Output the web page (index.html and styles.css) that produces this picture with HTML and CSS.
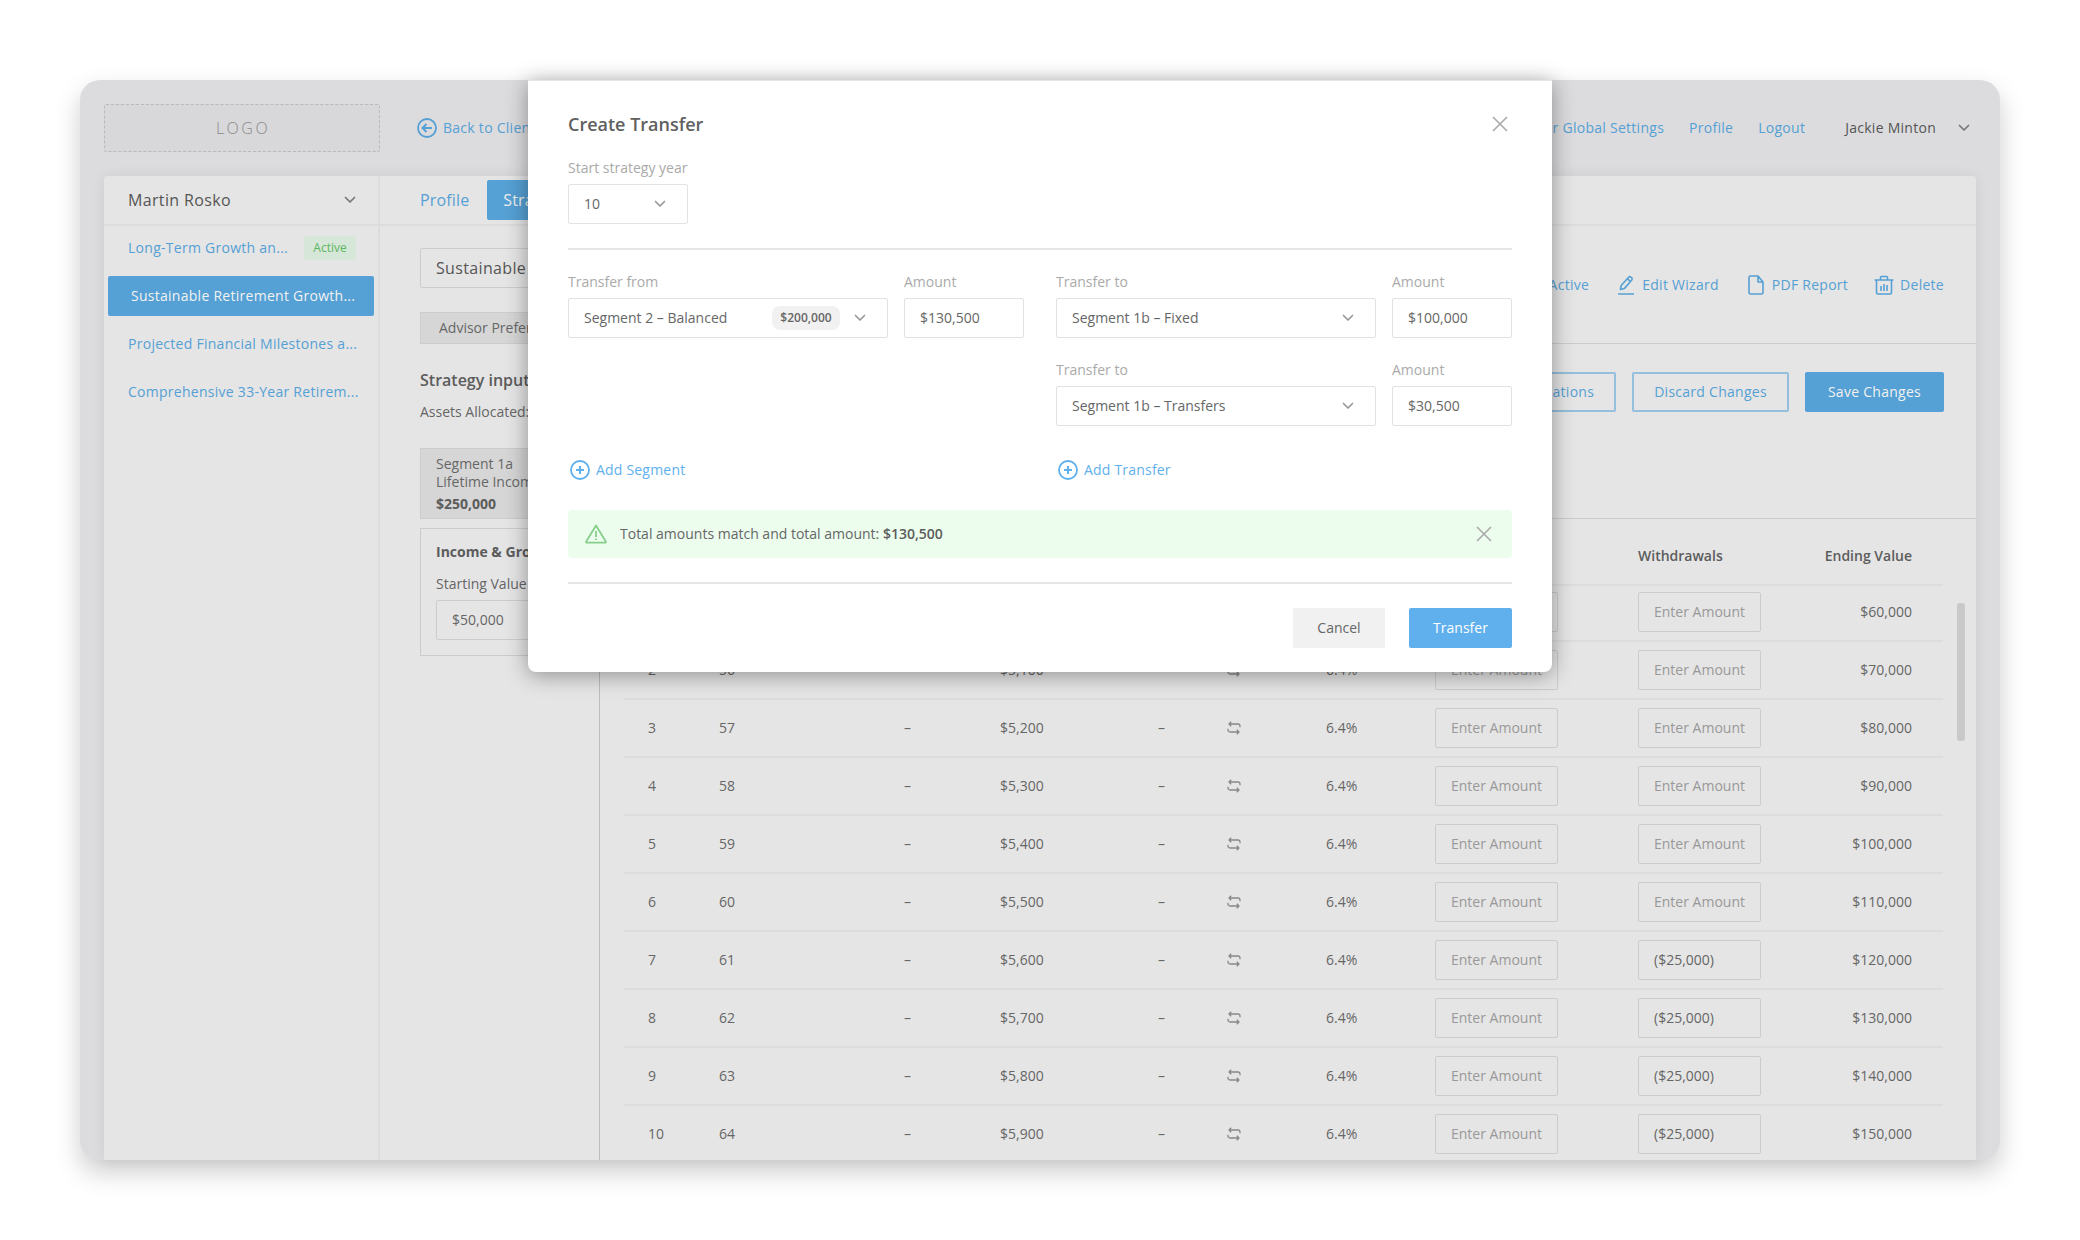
FILE: index.html
```html
<!DOCTYPE html>
<html lang="en">
<head>
<meta charset="utf-8">
<title>Create Transfer</title>
<link rel="stylesheet" href="styles.css">
</head>
<body>
<svg class="sprite" xmlns="http://www.w3.org/2000/svg">
  <symbol id="chev" viewBox="0 0 12 8"><path d="M1.5 1.5 6 6l4.500-4.500" fill="none" stroke="currentColor" stroke-width="1.700" stroke-linecap="round" stroke-linejoin="round"/></symbol>
  <symbol id="close" viewBox="0 0 16 16"><path d="M1 1l14 14M15 1 1 15" fill="none" stroke="currentColor" stroke-width="1.600"/></symbol>
  <symbol id="repeat" viewBox="0 0 14 14"><path d="M4.200 .8 2 3l2.200 2.200M2 3h9a2 2 0 0 1 2 2v1.200M9.800 8.800 12 11l-2.200 2.200M12 11H3a2 2 0 0 1-2-2V7.800" fill="none" stroke="currentColor" stroke-width="1.300" stroke-linejoin="round"/></symbol>
  <symbol id="plus" viewBox="0 0 20 20"><circle cx="10" cy="10" r="9" fill="none" stroke="currentColor" stroke-width="1.800"/><path d="M10 6v8M6 10h8" fill="none" stroke="currentColor" stroke-width="2"/></symbol>
</svg>
<div class="frame">
  <header class="topbar">
    <div class="logo">LOGO</div>
    <a class="back">
      <svg class="icon-20" viewBox="0 0 20 20"><circle cx="10" cy="10" r="9" fill="none" stroke="currentColor" stroke-width="1.800"/><path d="M15 10H6M9.500 6 5.500 10l4 4" fill="none" stroke="currentColor" stroke-width="2"/></svg>
      <span>Back to Clients</span>
    </a>
    <nav class="nav">
      <a>Advisor Global Settings</a>
      <a>Profile</a>
      <a>Logout</a>
      <span class="user">Jackie Minton</span>
      <svg class="chev chev-user"><use href="#chev"/></svg>
    </nav>
  </header>

  <div class="panel">
    <aside class="sidebar">
      <div class="side-head">
        <span>Martin Rosko</span>
        <svg class="chev"><use href="#chev"/></svg>
      </div>
      <ul class="side-list">
        <li class="side-item"><span>Long-Term Growth an...</span><span class="badge-active">Active</span></li>
        <li class="side-item selected">Sustainable Retirement Growth...</li>
        <li class="side-item">Projected Financial Milestones a...</li>
        <li class="side-item">Comprehensive 33-Year Retirem...</li>
      </ul>
    </aside>

    <main class="main">
      <div class="tabs">
        <a class="tab">Profile</a>
        <a class="tab tab-on">Strategies</a>
      </div>
      <div class="main-body">
        <section class="strategy">
          <div class="plan-select">Sustainable Plan</div>
          <div class="pref-btn">Advisor Preferences</div>
          <h3 class="inputs-title">Strategy inputs</h3>
          <p class="alloc">Assets Allocated: $250,000</p>
          <div class="seg-card">
            <div>Segment 1a</div>
            <div>Lifetime Income</div>
            <strong>$250,000</strong>
          </div>
          <div class="inc-card">
            <strong>Income &amp; Growth</strong>
            <div class="inc-label">Starting Value</div>
            <div class="inc-input">$50,000</div>
          </div>
        </section>

        <section class="detail">
          <div class="actions">
            <a class="action">Set Active</a>
            <a class="action">
              <svg class="icon-tall" viewBox="0 0 16 20"><path d="M2.500 14.500 3.200 10.500 10.600 2.200a1.600 1.600 0 0 1 2.200-.1l.9.8a1.600 1.600 0 0 1 .1 2.200L6.500 13.400zM9.300 3.700l3.500 3.100M0 19h16" fill="none" stroke="currentColor" stroke-width="1.600" stroke-linejoin="round"/></svg>
              Edit Wizard</a>
            <a class="action">
              <svg class="icon-tall" viewBox="0 0 16 20"><path d="M1 2.500A1.500 1.500 0 0 1 2.500 1H10l5 6v10.500a1.500 1.500 0 0 1-1.500 1.500h-11A1.500 1.500 0 0 1 1 17.500zM10 1v6h5" fill="none" stroke="currentColor" stroke-width="1.600" stroke-linejoin="round"/></svg>
              PDF Report</a>
            <a class="action action-del">
              <svg class="icon-a" viewBox="0 0 20 20"><path d="M.5 5h19M6.500 5V2.500a1 1 0 0 1 1-1h5a1 1 0 0 1 1 1V5M2.500 5v12.500a1.500 1.500 0 0 0 1.500 1.500h12a1.500 1.500 0 0 0 1.500-1.500V5M7 11v5M10 9v7M13 10v6" fill="none" stroke="currentColor" stroke-width="1.600" stroke-linejoin="round"/></svg>
              Delete</a>
          </div>
          <div class="buttons">
            <span class="btn btn-line">Run Calculations</span>
            <span class="btn btn-line">Discard Changes</span>
            <span class="btn btn-solid">Save Changes</span>
          </div>
          <div class="table">
            <div class="row row-head">
              <span>Year</span><span>Age</span><span>Fees</span><span>Income</span><span>Tax</span><span>Swap</span><span>Rate</span><span>Deposits</span><span>Withdrawals</span><span class="end">Ending Value</span>
            </div>
            <div class="row row-first"><span>1</span><span>55</span><span>–</span><span>$5,000</span><span>–</span><svg class="repeat"><use href="#repeat"/></svg><span>6.4%</span><span class="amt">Enter Amount</span><span class="amt">Enter Amount</span><span class="end">$60,000</span></div>
            <div class="row"><span>2</span><span>56</span><span>–</span><span>$5,100</span><span>–</span><svg class="repeat"><use href="#repeat"/></svg><span>6.4%</span><span class="amt">Enter Amount</span><span class="amt">Enter Amount</span><span class="end">$70,000</span></div>
            <div class="row"><span>3</span><span>57</span><span>–</span><span>$5,200</span><span>–</span><svg class="repeat"><use href="#repeat"/></svg><span>6.4%</span><span class="amt">Enter Amount</span><span class="amt">Enter Amount</span><span class="end">$80,000</span></div>
            <div class="row"><span>4</span><span>58</span><span>–</span><span>$5,300</span><span>–</span><svg class="repeat"><use href="#repeat"/></svg><span>6.4%</span><span class="amt">Enter Amount</span><span class="amt">Enter Amount</span><span class="end">$90,000</span></div>
            <div class="row"><span>5</span><span>59</span><span>–</span><span>$5,400</span><span>–</span><svg class="repeat"><use href="#repeat"/></svg><span>6.4%</span><span class="amt">Enter Amount</span><span class="amt">Enter Amount</span><span class="end">$100,000</span></div>
            <div class="row"><span>6</span><span>60</span><span>–</span><span>$5,500</span><span>–</span><svg class="repeat"><use href="#repeat"/></svg><span>6.4%</span><span class="amt">Enter Amount</span><span class="amt">Enter Amount</span><span class="end">$110,000</span></div>
            <div class="row"><span>7</span><span>61</span><span>–</span><span>$5,600</span><span>–</span><svg class="repeat"><use href="#repeat"/></svg><span>6.4%</span><span class="amt">Enter Amount</span><span class="amt filled">($25,000)</span><span class="end">$120,000</span></div>
            <div class="row"><span>8</span><span>62</span><span>–</span><span>$5,700</span><span>–</span><svg class="repeat"><use href="#repeat"/></svg><span>6.4%</span><span class="amt">Enter Amount</span><span class="amt filled">($25,000)</span><span class="end">$130,000</span></div>
            <div class="row"><span>9</span><span>63</span><span>–</span><span>$5,800</span><span>–</span><svg class="repeat"><use href="#repeat"/></svg><span>6.4%</span><span class="amt">Enter Amount</span><span class="amt filled">($25,000)</span><span class="end">$140,000</span></div>
            <div class="row"><span>10</span><span>64</span><span>–</span><span>$5,900</span><span>–</span><svg class="repeat"><use href="#repeat"/></svg><span>6.4%</span><span class="amt">Enter Amount</span><span class="amt filled">($25,000)</span><span class="end">$150,000</span></div>
            <div class="scroll-thumb"></div>
          </div>
        </section>
      </div>
    </main>
  </div>

  <div class="modal">
    <div class="modal-head">
      <h2>Create Transfer</h2>
      <svg class="x x-modal"><use href="#close"/></svg>
    </div>
    <label class="lbl">Start strategy year</label>
    <div class="sel sel-year"><span>10</span><svg class="chev"><use href="#chev"/></svg></div>
    <hr class="rule rule-top">
    <div class="form">
      <div class="form-col">
        <div class="pair">
          <div class="fld-wide">
            <label class="lbl">Transfer from</label>
            <div class="sel"><span class="sel-text">Segment 2 – Balanced</span><span class="pill">$200,000</span><svg class="chev chev-pill"><use href="#chev"/></svg></div>
          </div>
          <div class="fld-narrow">
            <label class="lbl">Amount</label>
            <div class="sel">$130,500</div>
          </div>
        </div>
        <a class="add"><svg class="icon-20"><use href="#plus"/></svg>Add Segment</a>
      </div>
      <div class="form-col">
        <div class="pair">
          <div class="fld-wide">
            <label class="lbl">Transfer to</label>
            <div class="sel"><span>Segment 1b – Fixed</span><svg class="chev"><use href="#chev"/></svg></div>
          </div>
          <div class="fld-narrow">
            <label class="lbl">Amount</label>
            <div class="sel">$100,000</div>
          </div>
        </div>
        <div class="pair">
          <div class="fld-wide">
            <label class="lbl">Transfer to</label>
            <div class="sel"><span>Segment 1b – Transfers</span><svg class="chev"><use href="#chev"/></svg></div>
          </div>
          <div class="fld-narrow">
            <label class="lbl">Amount</label>
            <div class="sel">$30,500</div>
          </div>
        </div>
        <a class="add"><svg class="icon-20"><use href="#plus"/></svg>Add Transfer</a>
      </div>
    </div>
    <div class="alert">
      <svg class="warn" viewBox="0 0 22 20"><path d="M11 1.500 20.800 17.500a.8.8 0 0 1-.7 1.200H1.900a.8.800 0 0 1-.7-1.200z" fill="none" stroke="currentColor" stroke-width="1.800" stroke-linejoin="round"/><path d="M11 7v6M11 14.500v1.600" fill="none" stroke="currentColor" stroke-width="1.800"/></svg>
      <span class="alert-text">Total amounts match and total amount: <strong>$130,500</strong></span>
      <svg class="x x-alert"><use href="#close"/></svg>
    </div>
    <hr class="rule rule-bottom">
    <div class="modal-foot">
      <span class="foot-btn cancel">Cancel</span>
      <span class="foot-btn submit">Transfer</span>
    </div>
  </div>
</div>
</body>
</html>
```

FILE: styles.css
```css
* { box-sizing: border-box; }
html, body { margin: 0; background: #fff; }
body {
  font-family: "Open Sans", "Liberation Sans", sans-serif;
  font-size: 14px;
  line-height: 20px;
  color: #666;
  height: 1240px;
  overflow: hidden;
}
.sprite { display: none; }
h2, h3, p, ul { margin: 0; padding: 0; }
ul { list-style: none; }
strong { font-weight: 700; }

.frame {
  position: relative;
  width: 1920px;
  height: 1080px;
  margin: 80px 0 0 80px;
  padding: 24px 24px 0;
  background: #dcdcde;
  border-radius: 20px;
  box-shadow: 0 12px 26px rgba(0, 0, 0, .2);
}

/* top bar */
.topbar { display: flex; align-items: center; height: 48px; margin-bottom: 24px; color: #55a0d4; letter-spacing: .27px; }
.logo {
  width: 276px;
  height: 48px;
  border: 1px dashed #b9b9bb;
  background: #d8d8da;
  color: #8a8a8a;
  font-size: 16px;
  font-weight: 300;
  letter-spacing: 2.500px;
  line-height: 46px;
  text-align: center;
  text-indent: 2px;
  border-radius: 2px;
}
.back { display: flex; align-items: center; gap: 6px; margin-left: 37px; }
.icon-20 { width: 20px; height: 20px; flex: none; }
.nav { display: flex; align-items: center; gap: 25px; margin-left: auto; padding-right: 6px; }
.user { color: #555; margin-left: 15px; font-weight: 500; }
.chev { width: 12px; height: 8px; flex: none; color: #999; }
.chev-user { color: #777; margin-left: -3px; }

/* panel */
.panel {
  display: flex;
  height: 984px;
  background: #e5e5e5;
  border-radius: 4px 4px 0 0;
  box-shadow: 0 0 14px rgba(0, 0, 0, .07);
  overflow: hidden;
}
.sidebar { width: 276px; flex: none; border-right: 2px solid #dcdcdc; }
.side-head {
  display: flex;
  align-items: center;
  justify-content: space-between;
  height: 50px;
  padding: 0 22px 0 24px;
  border-bottom: 2px solid #dcdcdc;
  font-size: 16px;
  font-weight: 500;
  letter-spacing: .35px;
  color: #555;
}
.side-head .chev { color: #777; }
.side-list { display: flex; flex-direction: column; gap: 8px; padding: 2px 4px 0; }
.side-item {
  display: flex;
  align-items: center;
  justify-content: space-between;
  height: 40px;
  padding: 0 18px 0 20px;
  color: #55a0d4;
  letter-spacing: .27px;
  white-space: nowrap;
}
.side-item.selected { background: #55a0d4; color: #f2f2f2; border-radius: 2px; padding-left: 23px; }
.badge-active {
  width: 52px;
  height: 24px;
  line-height: 24px;
  text-align: center;
  font-size: 12px;
  letter-spacing: 0;
  color: #5cb660;
  background: #d6e6d8;
  border-radius: 3px;
}

.main { flex: 1; min-width: 0; display: flex; flex-direction: column; }
.tabs {
  display: flex;
  height: 50px;
  padding: 4px 0 0 40px;
  gap: 18px;
  border-bottom: 2px solid #dcdcdc;
  font-size: 16px;
  letter-spacing: .15px;
}
.tab { height: 40px; line-height: 40px; color: #55a0d4; }
.tab-on { background: #55a0d4; color: #eee; padding: 0 16px; border-radius: 2px; }
.main-body { flex: 1; display: flex; min-height: 0; }

.strategy { width: 220px; flex: none; padding: 22px 0 0 40px; border-right: 1px solid #bdbdbd; white-space: nowrap; }
.plan-select {
  width: 170px;
  height: 40px;
  line-height: 38px;
  padding-left: 15px;
  border: 1px solid #ccc;
  border-radius: 2px;
  font-size: 16px;
  font-weight: 500;
  letter-spacing: .35px;
  color: #555;
}
.pref-btn {
  width: 170px;
  height: 32px;
  line-height: 30px;
  margin: 24px 0 0;
  padding-left: 18px;
  background: #d6d6d6;
  border: 1px solid #cdcdcd;
}
.inputs-title { margin-top: 24px; font-size: 16px; font-weight: 600; line-height: 24px; color: #5c5c5c; }
.alloc { margin-top: 10px; }
.seg-card {
  width: 160px;
  height: 71px;
  margin-top: 26px;
  padding: 6px 15px 0;
  background: #d6d6d6;
  border: 1px solid #ccc;
  line-height: 18px;
}
.seg-card strong { display: block; margin-top: 4px; color: #5c5c5c; }
.inc-card {
  width: 160px;
  height: 128px;
  margin-top: 9px;
  padding: 13px 15px 0;
  border: 1px solid #ccc;
}
.inc-card strong { color: #5c5c5c; }
.inc-label { margin-top: 12px; }
.inc-input {
  width: 128px;
  height: 40px;
  line-height: 38px;
  margin-top: 6px;
  padding-left: 15px;
  border: 1px solid #ccc;
  border-radius: 2px;
}

.detail { flex: 1; min-width: 0; }
.actions {
  display: flex;
  align-items: center;
  justify-content: flex-end;
  gap: 29px;
  height: 118px;
  padding-right: 32px;
  border-bottom: 1px solid #ccc;
  color: #55a0d4;
  letter-spacing: .27px;
}
.action { display: flex; align-items: center; gap: 8px; }
.action-del { gap: 6px; margin-left: -3px; }
.icon-a { width: 20px; height: 20px; flex: none; }
.icon-tall { width: 16px; height: 20px; flex: none; }
.buttons {
  display: flex;
  justify-content: flex-end;
  gap: 16px;
  height: 175px;
  padding: 28px 32px 0 0;
  border-bottom: 1px solid #ccc;
  letter-spacing: .27px;
}
.btn { height: 40px; line-height: 40px; padding: 0 23px; border-radius: 2px; }
.btn-line { border: 2px solid #94bfdd; color: #55a0d4; line-height: 36px; padding: 0 20px; }
.btn-solid { background: #55a0d4; color: #f2f2f2; }

.table { position: relative; margin-left: 24px; }
.row {
  display: grid;
  grid-template-columns: 71px 185px 96px 158px 69px 99px 109px 203px 123px 1fr;
  align-items: center;
  width: 1319px;
  height: 58px;
  padding: 0 31px 0 24px;
  border-bottom: 2px solid #dcdcdc;
}
.row-head { height: 67px; padding-top: 27px; padding-bottom: 0; align-items: start; font-weight: 600; color: #5c5c5c; }
.row-first { height: 56px; padding-top: 6px; padding-bottom: 8px; }
.row > .end { text-align: right; white-space: nowrap; }
.repeat { width: 14px; height: 14px; color: #888; }
.amt {
  display: block;
  width: 123px;
  height: 40px;
  line-height: 38px;
  border: 1px solid #ccc;
  border-radius: 2px;
  text-align: center;
  color: #999;
}
.amt.filled { text-align: left; padding-left: 15px; color: #666; }
.scroll-thumb {
  position: absolute;
  left: 1333px;
  top: 84px;
  width: 8px;
  height: 138px;
  background: #c9c9c9;
  border-radius: 3px;
}

/* modal */
.modal {
  position: absolute;
  left: 448px;
  top: 0;
  width: 1024px;
  padding: 31px 40px 24px;
  background: #fff;
  border-top: 1px solid #e5e5e5;
  border-radius: 0 0 8px 8px;
  box-shadow: 0 3px 22px rgba(0, 0, 0, .38);
}
.modal-head { display: flex; align-items: center; justify-content: space-between; height: 24px; margin-bottom: 22px; }
.modal-head h2 { font-size: 18px; font-weight: 600; line-height: 24px; color: #606060; }
.x { color: #aaa; flex: none; }
.x-modal { width: 16px; height: 16px; margin-right: 4px; }
.lbl { display: block; height: 20px; margin-bottom: 6px; color: #aaa; }
.sel {
  display: flex;
  align-items: center;
  justify-content: space-between;
  height: 40px;
  padding: 0 15px;
  border: 1px solid #e2e2e2;
  border-radius: 2px;
  color: #666;
}
.sel-year { width: 120px; padding-right: 21px; }
.sel-text { flex: 1; }
.pill {
  width: 68px;
  height: 24px;
  line-height: 24px;
  margin-right: 14px;
  text-align: center;
  font-size: 12px;
  font-weight: 600;
  background: #f1f1f1;
  border-radius: 8px;
}
.chev-pill { margin-right: 0; }
.rule { height: 2px; margin: 0; border: 0; background: #e5e5e5; }
.rule-top { margin: 24px 0 22px; }
.rule-bottom { margin: 24px 0; }
.form { display: grid; grid-template-columns: 456px 456px; column-gap: 32px; }
.form-col { display: flex; flex-direction: column; gap: 22px; }
.pair { display: flex; gap: 16px; }
.fld-wide { width: 320px; }
.fld-narrow { width: 120px; }
.fld-wide .sel { padding-right: 21px; }
.add { display: flex; align-items: center; gap: 6px; margin: auto 0 0 2px; padding-top: 12px; color: #5fb0ec; letter-spacing: .2px; }
.alert {
  display: flex;
  align-items: center;
  height: 48px;
  margin-top: 30px;
  padding: 0 20px 0 17px;
  background: #ecfdee;
  border-radius: 4px;
}
.warn { width: 22px; height: 20px; color: #86cf8b; flex: none; }
.alert-text { flex: 1; margin-left: 13px; }
.alert-text strong { font-weight: 600; color: #5c5c5c; }
.x-alert { width: 16px; height: 16px; }
.modal-foot { display: flex; justify-content: flex-end; gap: 24px; }
.foot-btn { height: 40px; line-height: 40px; text-align: center; border-radius: 2px; }
.cancel { width: 92px; background: #f1f1f1; }
.submit { width: 103px; background: #5fb0ec; color: #fff; font-weight: 500; }
```
